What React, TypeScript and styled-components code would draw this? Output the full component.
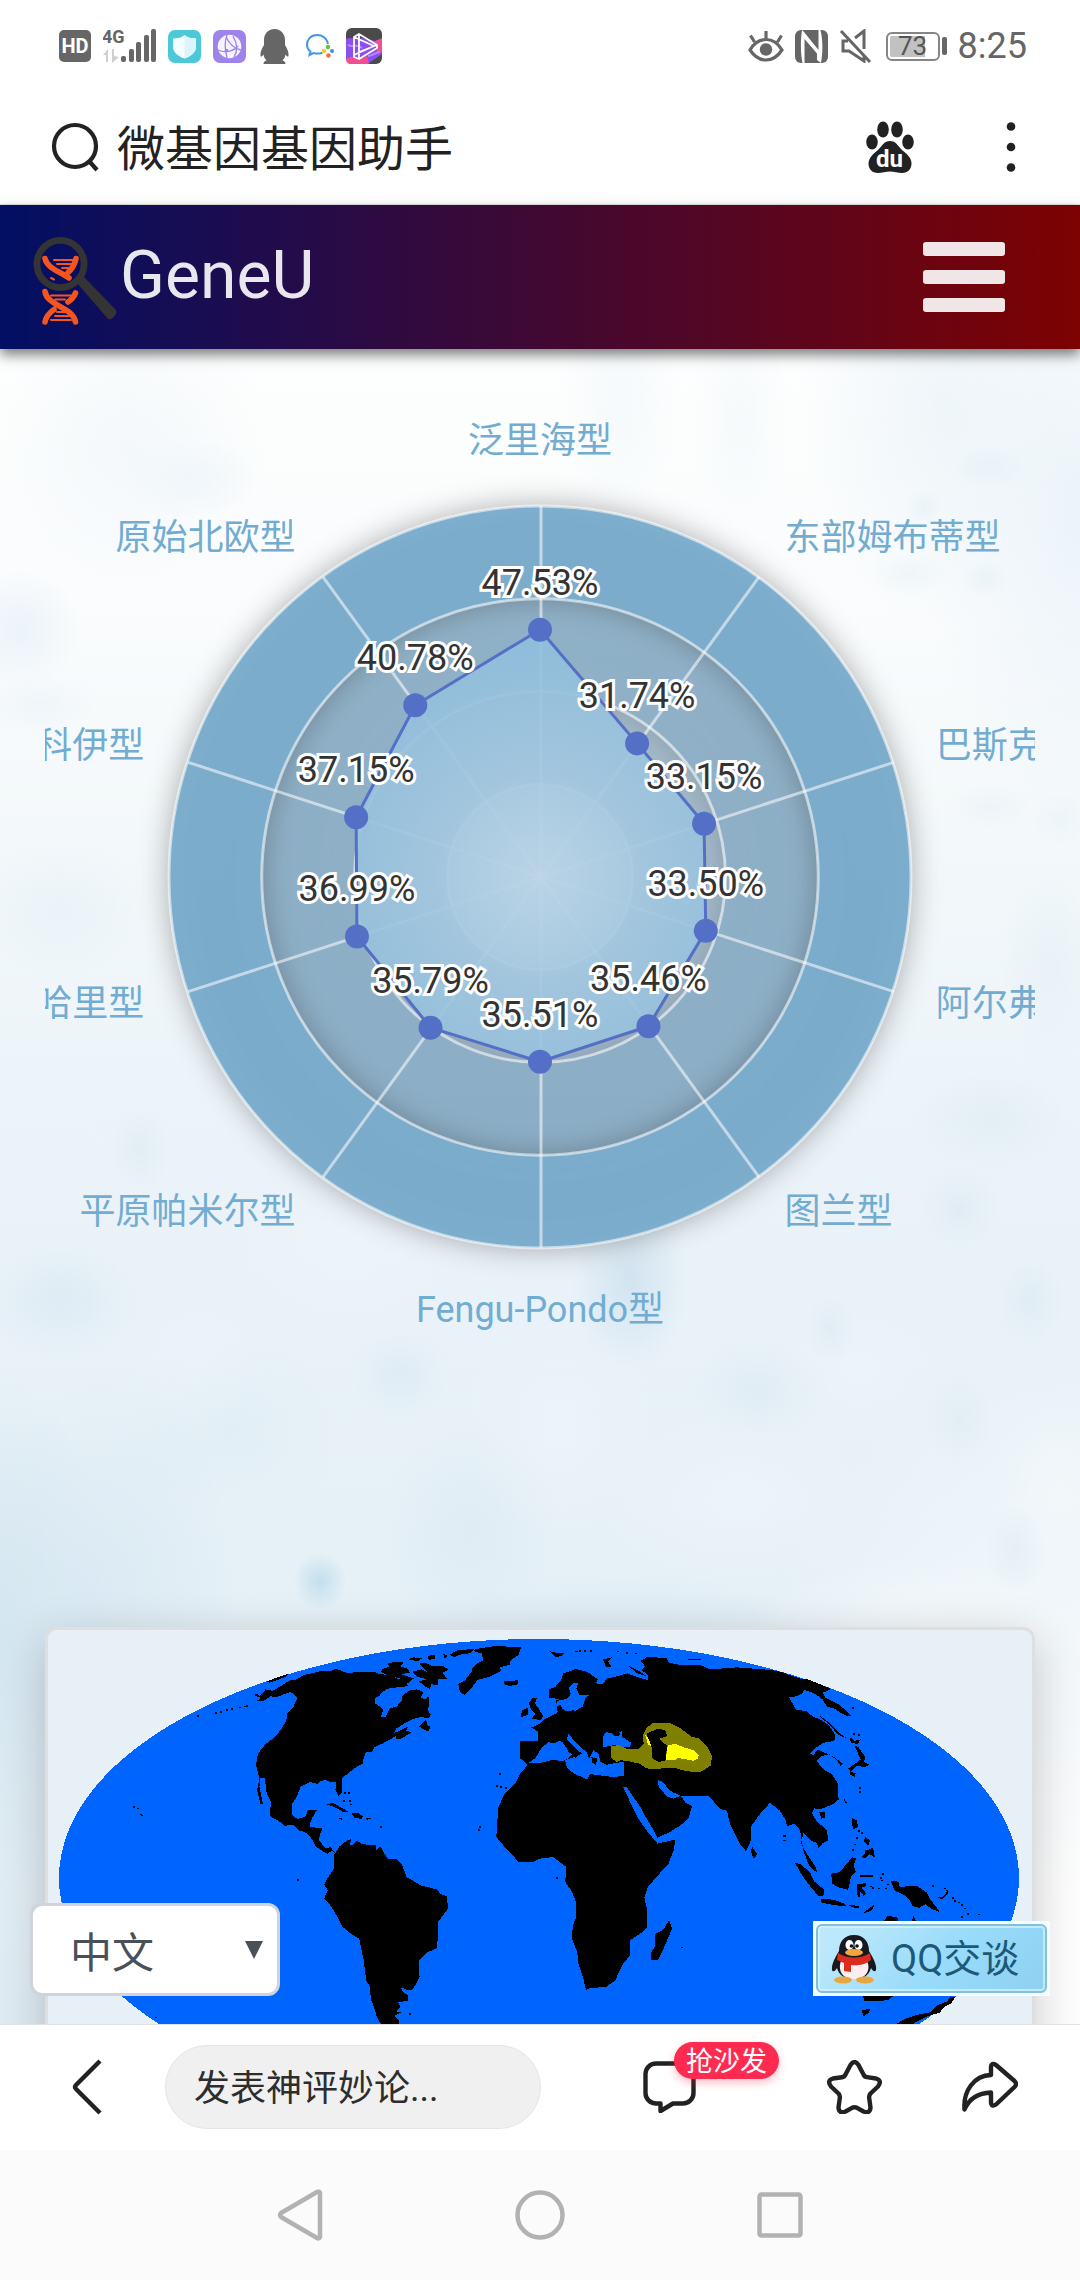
import React from "react";
import styled, { createGlobalStyle } from "styled-components";

const sans = `Roboto, "Noto Sans CJK SC", sans-serif`;
const ink = "#222222";
const statusGray = "#666666";

const GlobalStyle = createGlobalStyle`
  *, *::before, *::after { box-sizing: border-box; }
  body { margin: 0; background: #ffffff; font-family: ${sans}; }
  button, input, select { font-family: inherit; }
`;

const Screen = styled.div`
  display: flex;
  flex-direction: column;
  height: 100vh;
  background: #ffffff;
`;

/* ---------- status bar ---------- */

const StatusBar = styled.div`
  display: flex;
  flex: none;
  justify-content: space-between;
  align-items: center;
  height: 92px;
  padding: 0 53px 0 59px;
  color: ${statusGray};
`;

const StatusGroup = styled.div<{ $gap: number }>`
  display: flex;
  align-items: center;
  gap: ${(p) => p.$gap}px;
`;

const Battery = styled.div`
  display: flex;
  align-items: center;
  gap: 2px;
  margin-left: 3px;
`;

const BatteryBody = styled.span`
  width: 54px;
  height: 29px;
  border: 2px solid #858585;
  border-radius: 6px;
  padding: 2px;
  background: linear-gradient(90deg, #c1c1c1 76%, transparent 76%) content-box;
  color: #555555;
  font-size: 26px;
  line-height: 21px;
  text-align: center;
`;

const BatteryTip = styled.span`
  width: 5px;
  height: 18px;
  border-radius: 2px;
  background: ${statusGray};
`;

const Clock = styled.span`
  font-size: 36px;
  line-height: 44px;
`;

/* ---------- search bar ---------- */

const SearchBar = styled.form`
  display: flex;
  flex: none;
  align-items: center;
  height: 113px;
  padding: 0 55px 3px 51px;
  border-bottom: 1px solid #e4e4e4;
`;

const SearchInput = styled.input`
  flex: 1;
  min-width: 0;
  height: 72px;
  padding: 0 0 4px;
  margin-left: 18px;
  border: 0;
  outline: 0;
  background: transparent;
  color: ${ink};
  font-size: 48px;
`;

const IconButton = styled.button`
  display: flex;
  align-items: center;
  justify-content: center;
  padding: 0;
  border: 0;
  background: transparent;
  cursor: pointer;
`;

const MoreButton = styled(IconButton)`
  width: 28px;
  margin-left: 83px;
`;

/* ---------- site header ---------- */

const SiteHeader = styled.header`
  position: relative;
  z-index: 2;
  display: flex;
  flex: none;
  align-items: center;
  justify-content: space-between;
  height: 144px;
  padding: 0 75px 0 33px;
  background: linear-gradient(90deg, #020f64, #7d0202);
  box-shadow: 0 6px 12px rgba(0, 0, 0, 0.5);
`;

const Brand = styled.a`
  display: flex;
  align-items: center;
  gap: 3px;
  padding-top: 9px;
  color: rgba(255, 255, 255, 0.9);
  font-size: 66px;
  line-height: 88px;
  text-decoration: none;
`;

const BrandName = styled.span`
  padding-bottom: 12px;
`;

const MenuButton = styled.button`
  display: flex;
  flex-direction: column;
  gap: 14px;
  width: 82px;
  padding: 0;
  border: 0;
  background: transparent;
`;

const MenuBar = styled.span`
  height: 14px;
  border-radius: 3px;
  background: rgba(255, 255, 255, 0.9);
`;

/* ---------- page ---------- */

type Blob = [number, number, number, number, string];

const blobs: Blob[] = [
  [320, 1232, 26, 28, "rgba(176,214,232,0.65)"],
  [400, 1026, 50, 44, "rgba(204,225,239,0.35)"],
  [630, 930, 60, 90, "rgba(186,213,233,0.5)"],
  [60, 950, 80, 60, "rgba(200,223,238,0.35)"],
  [760, 1040, 70, 50, "rgba(208,227,239,0.35)"],
  [960, 860, 40, 44, "rgba(205,225,238,0.35)"],
  [990, 770, 80, 50, "rgba(212,230,239,0.4)"],
  [1030, 950, 34, 44, "rgba(206,226,238,0.35)"],
  [830, 980, 26, 34, "rgba(206,226,238,0.35)"],
  [960, 1070, 36, 46, "rgba(210,228,239,0.35)"],
  [1015, 1200, 30, 44, "rgba(210,228,239,0.35)"],
  [140, 800, 30, 40, "rgba(210,228,239,0.4)"],
  [60, 560, 90, 70, "rgba(230,240,247,0.6)"],
  [110, 780, 110, 70, "rgba(236,243,248,0.6)"],
  [20, 280, 60, 60, "rgba(226,236,247,0.6)"],
  [40, 355, 60, 30, "rgba(230,240,247,0.5)"],
  [130, 100, 140, 140, "rgba(240,246,250,0.7)"],
  [190, 130, 70, 40, "rgba(232,241,247,0.6)"],
  [620, 50, 60, 120, "rgba(234,243,248,0.4)"],
  [740, 70, 50, 120, "rgba(236,244,249,0.4)"],
  [940, 60, 140, 220, "rgba(230,240,246,0.6)"],
  [1080, 160, 160, 320, "rgba(232,241,248,0.8)"],
  [990, 118, 36, 20, "rgba(222,237,246,0.6)"],
  [924, 158, 20, 20, "rgba(222,237,245,0.5)"],
  [985, 230, 24, 20, "rgba(222,238,242,0.5)"],
  [910, 225, 40, 22, "rgba(228,241,245,0.5)"],
  [990, 458, 44, 22, "rgba(226,238,244,0.4)"],
  [1060, 470, 30, 26, "rgba(226,238,244,0.4)"],
  [1050, 620, 50, 100, "rgba(224,237,244,0.5)"],
  [100, 1240, 140, 220, "rgba(212,230,241,0.6)"],
  [0, 1280, 110, 260, "rgba(205,226,238,0.7)"],
  [470, 1180, 90, 110, "rgba(216,232,242,0.5)"],
  [620, 1300, 200, 80, "rgba(214,231,241,0.6)"],
  [230, 1080, 120, 90, "rgba(218,234,243,0.4)"],
  [560, 1080, 100, 110, "rgba(238,244,250,0.8)"],
  [200, 1010, 70, 70, "rgba(238,245,250,0.6)"],
  [350, 900, 120, 110, "rgba(238,244,250,0.7)"],
  [740, 1150, 150, 90, "rgba(240,245,250,0.7)"],
  [860, 1020, 120, 90, "rgba(238,244,250,0.7)"],
  [920, 1290, 180, 80, "rgba(245,248,250,0.8)"],
  [1060, 1140, 70, 90, "rgba(245,248,250,0.7)"],
];

const blobLayers = blobs
  .map(([x, y, w, h, c]) => `radial-gradient(${w}px ${h}px at ${x}px ${y}px, ${c}, transparent)`)
  .join(",\n    ");

const Page = styled.main`
  position: relative;
  flex: 1;
  min-height: 0;
  overflow: hidden;
  background:
    ${blobLayers},
    radial-gradient(400px 700px at 100% 100%, #fdfdfd 20%, transparent),
    linear-gradient(180deg, #fdfefe 0, #fafcfd 250px, #f3f8fa 500px, #ebf3f9 800px, #e5f0f7 1250px, #deebf2 1680px);
`;

const ChartSection = styled.section`
  padding: 0 45px;
  margin-bottom: 222px;
`;

const ChartSvg = styled.svg`
  display: block;
  width: 100%;
  height: auto;
  overflow: hidden;
  font-family: ${sans};
  font-size: 36px;
`;

const AxisLabel = styled.text`
  fill: #72acd1;
`;

const ValueLabel = styled.text`
  fill: #333333;
  stroke: #ffffff;
  stroke-width: 6px;
  stroke-linejoin: miter;
  stroke-miterlimit: 2;
  paint-order: stroke;
  text-anchor: middle;
`;

const MapCard = styled.section`
  margin: 0 45px;
  padding: 9px 13px 9px 11px;
  border: 3px solid #dfdfdf;
  border-radius: 12px;
  background: #e7f0f7;
  box-shadow: 0 12px 48px rgba(0, 0, 0, 0.2);
`;

const MapSvg = styled.svg`
  display: block;
  width: 100%;
  aspect-ratio: 960 / 478;
  shape-rendering: crispEdges;
`;

const FloatingBar = styled.div`
  position: absolute;
  right: 30px;
  bottom: 28px;
  left: 30px;
  display: flex;
  align-items: flex-end;
  justify-content: space-between;
`;

const LanguagePicker = styled.label`
  display: grid;
  align-items: center;
  width: 250px;
`;

const LanguageSelect = styled.select`
  grid-area: 1 / 1;
  height: 93px;
  padding: 8px 36px 0 37px;
  border: 3px solid #ced4da;
  border-radius: 12px;
  appearance: none;
  background: #ffffff;
  color: #495057;
  font-size: 42px;
`;

const SelectArrow = styled.svg`
  grid-area: 1 / 1;
  justify-self: end;
  margin-right: 17px;
  pointer-events: none;
`;

const QQFrame = styled.button`
  padding: 3px;
  border: 0;
  background: #f3ffff;
`;

const QQFace = styled.span`
  display: flex;
  align-items: center;
  gap: 14px;
  width: 231px;
  height: 69px;
  padding: 0 13px;
  border: 2px solid #86bfdc;
  border-radius: 6px;
  background: linear-gradient(135deg, #bde8fb 10%, #98dbfa 55%, #8fd0f0);
  box-shadow: inset 0 0 0 2px rgba(214, 243, 253, 0.7);
  color: #1c5878;
  font-size: 38px;
  line-height: 44px;
  white-space: nowrap;
`;

/* ---------- bottom bars ---------- */

const Toolbar = styled.div`
  display: flex;
  flex: none;
  align-items: center;
  justify-content: space-between;
  height: 126px;
  padding: 0 62px 2px 72px;
  border-top: 1px solid #e2e2e2;
`;

const ToolGroup = styled.div<{ $gap: number }>`
  display: flex;
  align-items: center;
  gap: ${(p) => p.$gap}px;
`;

const CommentInput = styled.input`
  width: 376px;
  height: 84px;
  padding: 4px 28px 0;
  border: 1px solid #e5e5e5;
  border-radius: 42px;
  outline: 0;
  background: #f0f0f0;
  color: #2d2d2d;
  font-size: 36px;
  &::placeholder { color: #2d2d2d; opacity: 1; }
`;

const CommentButton = styled(IconButton)`
  position: relative;
  padding-right: 51px;
`;

const Badge = styled.span`
  position: absolute;
  top: -19px;
  left: 31px;
  width: 105px;
  height: 37px;
  border-radius: 19px;
  background: #ff2a50;
  box-shadow: 0 4px 8px rgba(255, 42, 80, 0.3);
  color: #ffffff;
  font-size: 27px;
  line-height: 40px;
  text-align: center;
`;

const NavBar = styled.nav`
  display: flex;
  flex: none;
  align-items: center;
  justify-content: center;
  gap: 190px;
  height: 130px;
  background: #fbfbfb;
`;

/* ---------- status icons ---------- */

const HdIcon = () => (
  <svg width="32" height="32" viewBox="0 0 32 32">
    <rect width="32" height="32" rx="5" fill={statusGray} />
    <text x="16" y="23" textAnchor="middle" fontSize="20" fontWeight="700" fontFamily="Roboto, sans-serif" fill="#fff">HD</text>
  </svg>
);

const SignalIcon = () => (
  <svg width="53" height="36" viewBox="0 0 53 36" fill={statusGray}>
    <text x="-1" y="15" fontSize="18" fontWeight="700" fontFamily="Roboto, sans-serif">4G</text>
    <path d="M0 27l5-6v13H3v-7zM9 21h2v7l5 1-7 6z" fill="#cfcfcf" />
    <rect x="18" y="28" width="5" height="6" rx="2" />
    <rect x="26" y="21" width="5" height="13" rx="2" />
    <rect x="33" y="14" width="5" height="20" rx="2" />
    <rect x="41" y="7" width="5" height="27" rx="2" />
    <rect x="48" y="1" width="5" height="33" rx="2" />
  </svg>
);

const ShieldIcon = () => (
  <svg width="33" height="33" viewBox="0 0 33 33">
    <rect width="33" height="33" rx="7" fill="#4cc8d8" />
    <path d="M16.500 5C19 7.500 23 8.500 28 8.500V17c0 5-5 9.500-11.500 11.500C10 26.500 5 22 5 17V8.500c5 0 9-1 11.500-3.500z" fill="#f2fdff" />
    <path d="M16.500 5C19 7.500 23 8.500 28 8.500V17c0 5-5 9.500-11.500 11.500z" fill="#dbf5fa" />
  </svg>
);

const WebIcon = () => (
  <svg width="33" height="33" viewBox="0 0 33 33">
    <rect width="33" height="33" rx="7" fill="#9d83ea" />
    <circle cx="16.500" cy="16.500" r="11.800" fill="#f6f2ff" />
    <g fill="none" stroke="#9d83ea" strokeWidth="1.300">
      <path d="M14 5c-3 7-2 15 0 23M13 7c4 8 9 12 15 13M5 20c6 3 15 2 20-4M21 27c4-6 3-14-1-21" />
    </g>
    <circle cx="13.500" cy="20.500" r="1.800" fill="#9d83ea" />
  </svg>
);

const QQStatusIcon = () => (
  <svg width="33" height="35" viewBox="0 0 33 35" fill={statusGray}>
    <path d="M16.500 0C23 0 27 5 27 11v5c2 3 4 7 3.500 11-.5 1.500-2 0-3-1.500-.5 3-1.500 4.500-3 6 2 .7 3 1.500 3 3.500H5.500c0-2 1-2.800 3-3.500-1.500-1.500-2.500-3-3-6-1 1.500-2.500 3-3 1.500C2 23 4 19 6 16v-5C6 5 10 0 16.500 0z" />
  </svg>
);

const ChatStatusIcon = () => (
  <svg width="31" height="26" viewBox="0 0 31 26" fill="none">
    <path d="M25 11C24 5 19 2 14 2 8 2 4 6.500 4 11.500c0 3 1.500 5.500 3.500 7L6.500 22l4-2c3 1 6 .7 9-.3" stroke="#4596e6" strokeWidth="2" />
    <circle cx="25" cy="14" r="2.200" fill="#6bc235" />
    <circle cx="29" cy="18" r="2" fill="#3f8ee8" />
    <circle cx="21" cy="18" r="2.200" fill="#fdc82f" />
    <circle cx="25.500" cy="22.500" r="2.200" fill="#f96b35" />
  </svg>
);

const VideoStatusIcon = () => (
  <svg width="36" height="36" viewBox="0 0 36 36">
    <rect width="36" height="36" rx="6" fill="#4a4a4a" />
    <path d="M0 11c6-3 10 2 16-1l18 4 2 12-13 9H6l-6-5z" fill="#8b4ff0" />
    <path d="M29 13l7-3v14l-5 1zM0 31c5-4 8-1 13 0l8-3 2 8H5c-3 0-5-2-5-5z" fill="#ef4f93" />
    <path d="M2 17c6 3 9-2 14 3M22 28c4 0 6-3 12-4" stroke="#b58bff" strokeWidth="2" fill="none" />
    <g fill="none" stroke="#fff" strokeWidth="1.800" strokeLinejoin="round">
      <path d="M8 9l5-3 18 11v3L13 31l-5-2zM13 6v25M8 9l20 9-20 9M31 17L13 24" />
    </g>
  </svg>
);

const EyeIcon = () => (
  <svg width="36" height="32" viewBox="0 0 36 32" fill="none" stroke={statusGray} strokeWidth="3.200">
    <path d="M2 20C6 13 11 9.500 18 9.500S30 13 34 20c-4 6-9 10-16 10S6 26 2 20zM18 1v8M2.500 5.500L6.500 12M33.500 5.500L29.500 12" />
    <circle cx="18" cy="19.500" r="6.200" fill={statusGray} stroke="none" />
  </svg>
);

const NfcIcon = () => (
  <svg width="33" height="33" viewBox="0 0 33 33">
    <rect width="33" height="33" rx="6" fill={statusGray} />
    <path d="M7 0C5.500 10 5.500 23 7.500 33H9.500V9L22 23.500V30l4 3c2-10 2-23-.5-33h-2v20L9 2z" fill="#fff" />
    <path d="M9.500 0H20c1.500 5 2 10 2 16zM12 16l11 17H11c1-6 1-11 1-17z" fill={statusGray} />
  </svg>
);

const MuteIcon = () => (
  <svg width="33" height="34" viewBox="0 0 33 34" fill="none" stroke={statusGray} strokeWidth="3">
    <path d="M16 9l9-7v18M9 12H4v10h6l15 10v-6M2 2l29 31" />
  </svg>
);

/* ---------- toolbar icons ---------- */

const SearchIcon = () => (
  <svg width="48" height="50" viewBox="0 0 48 50" fill="none" stroke={ink} strokeWidth="4.200">
    <circle cx="24" cy="24" r="21" />
    <path d="M38 39l8 9" />
  </svg>
);

const PawIcon = () => (
  <svg width="48" height="52" viewBox="0 0 48 52" fill={ink}>
    <ellipse cx="6" cy="21" rx="5.800" ry="7.500" />
    <ellipse cx="17" cy="8.500" rx="5.800" ry="8" />
    <ellipse cx="31" cy="8.500" rx="5.800" ry="8" />
    <ellipse cx="42" cy="21" rx="5.800" ry="7.500" />
    <path d="M24 20c6 0 8 5 12 9 5 4 9.500 8 9.500 13.500C45.500 48 42 52 36 52c-4 0-8-1.500-12-1.500S16 52 12 52c-6 0-9.500-4-9.500-9.500C2.500 37 7 33 12 29c4-4 6-9 12-9z" />
    <text x="23.500" y="46" textAnchor="middle" fontSize="24" fontWeight="700" fontFamily="Roboto, sans-serif" fill="#fff">du</text>
  </svg>
);

const MoreIcon = () => (
  <svg width="10" height="50" viewBox="0 0 10 50" fill={ink}>
    <circle cx="5" cy="4.500" r="4.300" />
    <circle cx="5" cy="25" r="4.300" />
    <circle cx="5" cy="45.500" r="4.300" />
  </svg>
);

const LogoIcon = () => (
  <svg width="84" height="89" viewBox="13 12 84 89" fill="none">
    <g stroke="#f4551f" strokeLinecap="round">
      <path d="M25 33.500C27 43 39 46 49 53M56 33.500C54.500 40 52 44 48 47.500M25 66.500C27 81 53 82 55.500 97M55.500 68C54 72 51 75 48 77M25 97C26 91 29 88 34 84.500" strokeWidth="5.600" />
      <path d="M34 35h19M37 39h14M42 43h7M31 53l3 1.500M31 70.500h20M35 74.500h10M37 87h10M35 91h14M31 95h20" strokeWidth="2" />
    </g>
    <path d="M57 58l7-6 32 33c2 3-4 11-8 9z" fill="#343434" />
    <circle cx="40.500" cy="39" r="23.600" stroke="#343434" strokeWidth="6.800" />
  </svg>
);

const BackIcon = () => (
  <svg width="30" height="56" viewBox="0 0 30 56" fill="none" stroke={ink} strokeWidth="4.500">
    <path d="M28 2L4 26q-2 2 0 4l24 24" />
  </svg>
);

const CommentIcon = () => (
  <svg width="53" height="52" viewBox="0 0 53 52" fill="none" stroke={ink} strokeWidth="4.400" strokeLinejoin="round">
    <path d="M13 2.500h27A10.500 10.500 0 0 1 50.500 13v19A10.500 10.500 0 0 1 40 42.500H30L17.500 50v-7.500H13A10.500 10.500 0 0 1 2.500 32V13A10.500 10.500 0 0 1 13 2.500z" />
  </svg>
);

const StarIcon = () => (
  <svg width="55" height="54" viewBox="0 0 55 54" fill="none" stroke={ink} strokeWidth="4.400" strokeLinejoin="round">
    <path d="M23.500 5Q27.500 -1 31.500 5L36.500 14.500Q37.500 16.800 40 17.200L49 18.500Q55.500 20.500 51 26.500L43.500 33.500Q41.800 35.500 42.200 38L43.500 47.500Q43 54 36.500 51.500L30 47.800Q27.500 46.600 25 47.800L18.500 51.500Q12 54 11.500 47.500L12.800 38Q13.200 35.500 11.500 33.500L4 26.500Q-.5 20.500 6 18.500L15 17.200Q17.500 16.800 18.500 14.500z" />
  </svg>
);

const ShareIcon = () => (
  <svg width="56" height="51" viewBox="0 0 56 51" fill="none" stroke={ink} strokeWidth="4.400" strokeLinejoin="round">
    <path d="M29 14V6q.5-5 5-2l18.500 16q3 3 0 6L34 43.500q-4.500 3-5-2v-10C16 32 7 38 2.500 48.500 1 30 12 14.500 29 14z" />
  </svg>
);

const PenguinIcon = () => (
  <svg width="46" height="50" viewBox="0 0 46 50">
    <path d="M23 1C33 1 38 8 38 17c3 5 8 13 7 19-1 3-4 0-5-2-2 7-7 11-17 11S8 41 6 34c-1 2-4 5-5 2-1-6 4-14 7-19C8 8 13 1 23 1z" fill="#17191f" />
    <path d="M10 27c8 4 19 4 26 0 4 8 0 18-13 18S7 35 10 27z" fill="#fbeeee" />
    <ellipse cx="18.500" cy="11" rx="4" ry="5" fill="#fff" />
    <ellipse cx="27.500" cy="11" rx="4" ry="5" fill="#fff" />
    <circle cx="20.500" cy="12" r="1.800" fill="#111" />
    <circle cx="26" cy="12" r="1.800" fill="#111" />
    <ellipse cx="23" cy="18.500" rx="9" ry="3.500" fill="#f0a63c" />
    <path d="M7 19c9 6 23 6 32 0l1 7c-6 5-15 6-20 5v7l-7-1v-8l-7-3z" fill="#db2c1d" />
    <ellipse cx="12" cy="46" rx="9" ry="3.500" fill="#e9a83f" />
    <ellipse cx="34" cy="46" rx="9" ry="3.500" fill="#e9a83f" />
  </svg>
);

/* ---------- radar chart ---------- */

const CX = 495;
const CY = 528;
const R = 371;
const MAX = 71.295;

type Axis = { name: string; value: number; anchor: "start" | "middle" | "end" };

const axes: Axis[] = [
  { name: "泛里海型", value: 47.53, anchor: "middle" },
  { name: "原始北欧型", value: 40.78, anchor: "end" },
  { name: "科伊型", value: 37.15, anchor: "end" },
  { name: "哈里型", value: 36.99, anchor: "end" },
  { name: "平原帕米尔型", value: 35.79, anchor: "end" },
  { name: "Fengu-Pondo型", value: 35.51, anchor: "middle" },
  { name: "图兰型", value: 35.46, anchor: "start" },
  { name: "阿尔弗型", value: 33.5, anchor: "start" },
  { name: "巴斯克型", value: 33.15, anchor: "start" },
  { name: "东部姆布蒂型", value: 31.74, anchor: "start" },
];

const at = (i: number, r: number) => {
  const a = (i / axes.length) * Math.PI * 2;
  return { x: CX - Math.sin(a) * r, y: CY - Math.cos(a) * r };
};

const ring = (outer: number, inner: number) => {
  const circle = (r: number) =>
    r ? `M${CX - r} ${CY}a${r} ${r} 0 1 0 ${2 * r} 0a${r} ${r} 0 1 0 ${-2 * r} 0z` : "";
  return circle(outer) + circle(inner);
};

const radii = [0, R / 4, R / 2, (R * 3) / 4, R];
const ringFills = [
  "rgba(114,172,209,0.2)",
  "rgba(112,152,182,0.5)",
  "rgba(112,158,190,0.66)",
  "rgba(118,169,203,0.92)",
];

const RadarChart = () => {
  const points = axes.map((a, i) => at(i, (a.value / MAX) * R));
  return (
    <ChartSvg viewBox="0 0 990 1056" role="img" aria-label="GeneU">
      <defs>
        <filter id="ringShadow" x="-20%" y="-20%" width="140%" height="140%">
          <feDropShadow dx="0" dy="0" stdDeviation="15" floodColor="#000" floodOpacity="0.36" />
        </filter>
        <radialGradient id="area" gradientUnits="userSpaceOnUse" cx={CX} cy={CY} r="250">
          <stop offset="0" stopColor="#b7d2e5" stopOpacity="0.9" />
          <stop offset="0.45" stopColor="#a1c6df" stopOpacity="0.91" />
          <stop offset="1" stopColor="#8dbddb" stopOpacity="0.92" />
        </radialGradient>
      </defs>
      {ringFills.map((fill, i) => (
        <path key={i} d={ring(radii[i + 1], radii[i])} fillRule="evenodd" fill={fill} filter="url(#ringShadow)" />
      ))}
      <g fill="none" stroke="#fff" strokeOpacity="0.55" strokeWidth="3">
        {radii.slice(1).map((r) => (
          <circle key={r} cx={CX} cy={CY} r={r} />
        ))}
        {axes.map((a, i) => {
          const end = at(i, R);
          return <line key={a.name} x1={CX + 1} y1={CY} x2={end.x + 1} y2={end.y} />;
        })}
      </g>
      <polygon points={points.map((p) => `${p.x},${p.y}`).join(" ")} fill="url(#area)" stroke="#5470c6" strokeWidth="3" strokeLinejoin="round" />
      {points.map((p, i) => (
        <circle key={i} cx={p.x} cy={p.y} r="12" fill="#5470c6" />
      ))}
      {points.map((p, i) => (
        <ValueLabel key={i} x={p.x} y={p.y - 35}>{`${axes[i].value.toFixed(2)}%`}</ValueLabel>
      ))}
      {axes.map((a, i) => {
        const p = at(i, R + 45);
        const shift = i === 0 ? -8 : i === 5 ? 29 : 10;
        return (
          <AxisLabel key={a.name} x={p.x} y={p.y + shift} textAnchor={a.anchor}>{a.name}</AxisLabel>
        );
      })}
    </ChartSvg>
  );
};

/* ---------- world map ---------- */

const land = [
  // North America
  "735,255 745,250 752,258 770,238 790,242 808,232 838,212 860,208 880,195 905,190 930,183 955,184 975,176 995,184 1012,190 1030,186 1085,185 1100,192 1130,195 1150,205 1175,212 1185,228 1150,232 1125,236 1108,246 1100,258 1088,264 1086,280 1105,290 1112,300 1105,320 1118,321 1130,295 1150,290 1165,272 1168,256 1190,240 1210,238 1228,246 1220,262 1232,268 1245,258 1246,285 1240,300 1250,312 1243,325 1222,320 1195,328 1170,342 1150,355 1143,368 1160,362 1185,348 1178,362 1195,366 1165,385 1150,388 1150,376 1135,386 1110,400 1085,412 1080,424 1062,425 1055,442 1052,460 1035,470 1010,488 992,506 992,545 982,558 973,538 976,515 960,517 945,510 928,512 922,522 900,515 872,530 860,560 848,580 848,615 862,626 885,620 893,600 920,598 908,618 900,635 900,650 935,655 928,672 925,690 945,715 958,710 972,728 962,722 950,730 935,722 915,708 900,678 885,666 865,660 852,645 825,646 805,630 783,618 785,575 772,545 768,505 755,502 752,530 762,580 755,580 745,540 752,505 742,465 748,430 770,402 800,378 820,350 830,330 834,308 850,292 862,265 850,250 840,246 825,252 800,262 785,258 765,272 740,274 757,264",
  // Chukotka sliver
  "775,214 800,203 838,190 828,200 800,212 780,218",
  // South America
  "970,732 985,708 1005,692 1018,686 1015,705 1022,706 1035,690 1050,702 1090,704 1092,718 1105,708 1110,722 1125,746 1150,746 1165,760 1174,785 1180,802 1200,812 1222,826 1250,832 1268,838 1278,850 1296,858 1300,895 1284,916 1270,936 1272,970 1266,1015 1240,1025 1226,1040 1216,1050 1217,1098 1207,1120 1195,1138 1180,1138 1162,1130 1170,1145 1184,1155 1183,1170 1155,1176 1162,1190 1150,1202 1162,1206 1145,1216 1158,1232 1150,1260 1130,1290 1105,1240 1096,1225 1085,1190 1075,1165 1074,1130 1062,1110 1055,1050 1047,1010 1042,985 1020,972 992,948 978,918 958,885 940,865 950,840 940,822 955,795 968,775",
  // Greenland
  "1372,120 1395,114 1440,108 1512,112 1505,135 1482,150 1478,165 1450,172 1455,182 1420,200 1385,210 1375,225 1348,254 1334,246 1330,222 1350,210 1368,185 1368,176 1384,160 1402,152 1398,130 1380,126",
  // Canadian Arctic
  "1108,178 1130,170 1125,160 1150,155 1172,158 1160,168 1182,176 1190,188 1162,192 1200,205 1180,222 1160,205 1128,198 1105,186",
  "1215,158 1238,160 1255,168 1288,168 1300,180 1284,188 1296,206 1272,206 1270,226 1250,222 1248,238 1232,228 1216,214 1238,208 1210,200 1196,185 1222,178 1240,186",
  "1305,135 1322,122 1378,116 1365,130 1340,132 1318,142",
  "1185,148 1198,142 1226,144 1215,152 1190,151", "1240,138 1262,134 1262,146 1244,150", "1284,130 1300,138 1290,144",
  // Iceland, Newfoundland, Caribbean
  "1462,212 1480,214 1502,210 1504,222 1480,228 1464,224", "1216,350 1236,328 1240,345 1250,350 1242,364",
  "945,582 965,578 990,592 1013,606 995,605 970,590", "1020,610 1038,608 1052,618 1048,626 1028,622", "980,623 992,624 990,629", "1062,622 1076,625 1064,629",
  // British Isles
  "1546,262 1558,264 1552,280 1566,300 1576,318 1570,330 1542,326 1554,312 1542,300 1534,280", "1516,300 1532,292 1532,314 1510,322",
  // Eurasia and Africa
  "1508,392 1562,392 1562,365 1542,352 1568,340 1580,328 1610,312 1618,305 1614,270 1626,272 1630,295 1645,304 1665,300 1690,290 1700,262 1668,258 1650,262 1640,270 1620,268 1608,264 1593,264 1592,238 1610,232 1628,210 1635,190 1660,182 1670,176 1705,186 1735,208 1728,220 1750,222 1760,206 1800,196 1820,190 1860,204 1880,210 1880,195 1862,180 1872,170 1860,152 1880,140 1935,145 1942,158 1980,166 2030,164 2062,178 2140,172 2240,180 2268,186 2320,205 2345,208 2412,236 2395,246 2386,244 2395,262 2430,280 2455,300 2472,320 2452,315 2420,295 2400,290 2388,268 2360,248 2335,240 2320,262 2290,262 2306,285 2310,300 2340,302 2360,320 2380,328 2405,345 2425,375 2422,392 2390,398 2372,410 2350,430 2362,435 2372,418 2400,430 2420,440 2446,460 2440,468 2430,452 2408,432 2385,438 2370,452 2392,480 2415,492 2432,520 2434,568 2418,582 2378,598 2364,594 2356,608 2370,632 2400,660 2404,690 2388,698 2376,714 2370,698 2352,690 2332,668 2325,700 2345,736 2368,770 2372,788 2348,766 2332,722 2322,660 2306,640 2284,648 2280,628 2262,600 2235,578 2210,605 2180,648 2180,690 2165,722 2150,706 2132,668 2118,640 2110,602 2090,596 2072,575 2055,556 2008,558 1975,556 1950,545 1935,530 1920,512 1908,510 1912,530 1935,558 1955,566 1975,556 1990,578 2008,588 1998,625 1975,645 1945,665 1908,682 1896,658 1878,628 1858,590 1838,560 1820,532 1808,530 1830,578 1852,625 1880,665 1908,700 1930,695 1960,688 1955,720 1940,760 1905,800 1880,830 1870,860 1878,900 1878,950 1860,968 1828,990 1828,1035 1808,1060 1785,1110 1758,1130 1715,1132 1700,1138 1692,1100 1678,1060 1675,1025 1660,985 1662,945 1672,920 1670,870 1658,840 1640,815 1644,770 1620,752 1605,740 1568,745 1545,755 1505,756 1482,728 1460,705 1440,680 1446,590 1465,550 1495,520 1510,490 1530,465 1520,452 1508,444",
  // Madagascar, Sri Lanka
  "1942,928 1950,955 1930,1005 1910,1048 1890,1050 1888,1030 1902,1005 1902,970 1925,958", "2182,708 2198,732 2188,746 2180,725",
  // Japan, Sakhalin, Taiwan, Hainan
  "2480,405 2492,412 2512,440 2508,455 2525,464 2508,472 2488,466 2470,485 2462,475 2480,462 2498,448", "2466,380 2480,392 2498,388 2490,402 2470,398", "2466,482 2484,490 2480,500 2466,492",
  "2380,318 2400,332 2440,372 2460,385 2435,375 2410,348", "2448,560 2460,582 2452,576", "2378,606 2396,606 2394,622 2384,626",
  // Philippines
  "2474,624 2488,630 2490,650 2478,658 2472,640", "2510,680 2526,690 2520,706 2508,695", "2502,740 2515,722 2534,712 2540,742 2524,732 2512,744",
  // Indonesia and New Guinea
  "2306,756 2325,762 2352,788 2362,812 2392,838 2390,856 2376,858 2350,826 2330,798", "2382,865 2420,868 2452,880 2456,888 2418,884 2384,876",
  "2412,790 2436,786 2455,764 2474,740 2484,745 2478,765 2484,785 2470,800 2462,838 2435,832 2416,820",
  "2488,822 2515,818 2512,828 2500,832 2515,850 2506,856 2498,842 2494,866 2488,850", "2496,795 2535,794 2534,800 2498,800", "2460,886 2475,884 2495,888 2490,894",
  "2504,910 2522,894 2540,882 2530,900", "2585,812 2608,814 2612,830 2632,828 2660,826 2690,846 2702,870 2718,890 2728,905 2706,896 2686,882 2668,892 2650,888 2640,868 2622,852 2598,842", "2720,862 2740,858 2750,840 2752,850 2736,866",
  // Australia, Tasmania, New Zealand
  "2552,938 2570,928 2575,916 2608,922 2605,938 2640,950 2652,916 2662,940 2680,1000 2660,1080 2600,1150 2580,1168 2545,1173 2508,1170 2500,1130 2420,1130 2400,1080 2420,1000 2500,960", "2502,1200 2526,1194 2522,1206 2506,1218",
  "2602,1240 2620,1228 2655,1215 2700,1205 2720,1185 2750,1172 2758,1158 2772,1160 2762,1178 2740,1190 2728,1206 2690,1218 2650,1240 2610,1250",
  // Svalbard, Novaya Zemlya
  "1596,124 1620,130 1638,128 1632,136 1614,142", "1750,148 1775,142 1765,155 1775,172 1758,170", "1996,146 2034,147 2034,151 1996,151", "1820,165 1850,180 1880,200 1850,190",
];

const seas = [
  // western Mediterranean
  "1532,460 1555,442 1570,416 1590,396 1608,400 1622,392 1635,398 1642,412 1664,430 1652,442 1635,452 1600,450 1568,458",
  // eastern Mediterranean and Aegean
  "1640,450 1668,440 1688,430 1668,412 1644,388 1650,372 1662,386 1685,412 1702,425 1710,445 1722,420 1738,432 1742,455 1760,464 1780,460 1812,454 1812,498 1775,500 1712,492 1705,508 1665,490 1645,472",
  // Black Sea
  "1750,378 1760,366 1785,372 1806,362 1806,380 1832,398 1828,410 1800,412 1785,404 1750,412",
  // Baltic and Gulf of Bothnia
  "1664,218 1678,220 1672,236 1682,256 1710,256 1686,270 1694,288 1670,302 1640,296 1626,284 1612,290 1618,272 1648,266 1656,250 1650,234",
  "2290,262 2306,260 2345,245 2378,275 2370,285 2350,280 2345,294 2310,296",
];

const islets: [number, number][] = [
  [386, 587], [396, 592], [404, 610], [407, 613], [860, 806], [448, 1218], [1390, 648], [1386, 656], [1448, 488], [1440, 524], [1450, 528], [1466, 530],
  [570, 316], [622, 307], [638, 303], [656, 297], [670, 294], [694, 290], [706, 287], [714, 285], [1008, 545], [996, 570], [1012, 570], [1014, 580], [1102, 648], [998, 545],
  [1670, 122], [1680, 120], [1695, 120], [1712, 120], [1790, 122], [1816, 126], [1842, 128], [1614, 800], [1976, 1009], [2274, 674], [2274, 688],
  [2492, 530], [2492, 542], [2490, 660], [2484, 680], [2478, 700], [2472, 716], [2500, 665], [2510, 720], [2555, 800], [2560, 788], [2556, 808],
  [2524, 826], [2532, 830], [2548, 832], [2570, 832], [2574, 820], [2704, 824], [2740, 832], [2746, 838], [2764, 860], [2770, 870], [2780, 874], [2790, 882], [2798, 892], [2790, 918], [2806, 908], [2840, 910],
  [2476, 370], [2490, 372], [2474, 292], [1186, 1208], [1092, 1210],
];

const WorldMap = () => (
  <MapSvg viewBox="170 87 2788 1432" preserveAspectRatio="none" role="img" aria-label="地图">
    <ellipse cx="1564" cy="803" rx="1394" ry="716" fill="#0064ff" />
    <g fill="#000000">
      {land.map((d, i) => (
        <polygon key={i} points={d} />
      ))}
    </g>
    <g fill="#0064ff">
      {seas.map((d, i) => (
        <polygon key={i} points={d} />
      ))}
    </g>
    <g fill="#000000">
      <polygon points="1630,392 1650,402 1668,416 1684,428 1676,432 1672,444 1650,425" />
      <polygon points="1716,440 1734,446 1728,464 1718,456" />
      <polygon points="1776,366 1800,368 1796,378 1780,376" />
      {islets.map(([x, y]) => (
        <rect key={`${x}-${y}`} x={x} y={y} width="6" height="5" />
      ))}
    </g>
    <polygon points="1773,408 1798,405 1820,416 1850,418 1868,402 1866,375 1875,355 1893,340 1943,338 1975,355 2008,380 2030,385 2052,408 2066,435 2064,465 2045,478 2028,487 1988,482 1960,474 1938,472 1898,478 1875,474 1855,460 1818,452 1800,450 1790,456 1773,442" fill="#808000" />
    <polygon points="1878,370 1895,362 1913,355 1932,362 1936,378 1914,386 1924,398 1936,404 1932,450 1913,456 1892,444 1892,410 1880,402" fill="#000000" />
    <g fill="#ffff00">
      <polygon points="1938,404 1962,402 1985,412 2012,420 2028,434 2026,446 2012,452 1985,446 1965,444 1960,450 1932,450" />
      <polygon points="1873,375 1880,380 1890,408 1880,402" />
    </g>
  </MapSvg>
);

export default function App() {
  return (
    <Screen>
      <GlobalStyle />
      <StatusBar>
        <StatusGroup $gap={12}>
          <HdIcon />
          <SignalIcon />
          <ShieldIcon />
          <WebIcon />
          <QQStatusIcon />
          <ChatStatusIcon />
          <VideoStatusIcon />
        </StatusGroup>
        <StatusGroup $gap={11}>
          <EyeIcon />
          <NfcIcon />
          <MuteIcon />
          <Battery>
            <BatteryBody>73</BatteryBody>
            <BatteryTip />
          </Battery>
          <Clock>8:25</Clock>
        </StatusGroup>
      </StatusBar>

      <SearchBar onSubmit={(e) => e.preventDefault()}>
        <SearchIcon />
        <SearchInput aria-label="搜索" type="text" defaultValue="微基因基因助手" />
        <IconButton type="button" aria-label="百度">
          <PawIcon />
        </IconButton>
        <MoreButton type="button" aria-label="更多">
          <MoreIcon />
        </MoreButton>
      </SearchBar>

      <SiteHeader>
        <Brand href="#">
          <LogoIcon />
          <BrandName>GeneU</BrandName>
        </Brand>
        <MenuButton type="button" aria-label="菜单">
          <MenuBar />
          <MenuBar />
          <MenuBar />
        </MenuButton>
      </SiteHeader>

      <Page>
        <ChartSection>
          <RadarChart />
        </ChartSection>
        <MapCard>
          <WorldMap />
        </MapCard>
        <FloatingBar>
          <LanguagePicker>
            <LanguageSelect aria-label="语言" defaultValue="zh">
              <option value="zh">中文</option>
            </LanguageSelect>
            <SelectArrow width="18" height="18" viewBox="0 0 18 18">
              <path d="M0 0h18L9 18z" fill="#495057" />
            </SelectArrow>
          </LanguagePicker>
          <QQFrame type="button">
            <QQFace>
              <PenguinIcon />
              QQ交谈
            </QQFace>
          </QQFrame>
        </FloatingBar>
      </Page>

      <Toolbar>
        <ToolGroup $gap={63}>
          <IconButton type="button" aria-label="返回">
            <BackIcon />
          </IconButton>
          <CommentInput aria-label="评论" placeholder="发表神评妙论..." />
        </ToolGroup>
        <ToolGroup $gap={80}>
          <CommentButton type="button">
            <CommentIcon />
            <Badge>抢沙发</Badge>
          </CommentButton>
          <IconButton type="button" aria-label="收藏">
            <StarIcon />
          </IconButton>
          <IconButton type="button" aria-label="分享">
            <ShareIcon />
          </IconButton>
        </ToolGroup>
      </Toolbar>

      <NavBar>
        <IconButton type="button" aria-label="后退">
          <svg width="50" height="52" viewBox="0 0 50 52" fill="none" stroke="#b2b2b2" strokeWidth="4.500" strokeLinejoin="round">
            <path d="M45 4v44q-1 2-3 1L6 28q-2-2 0-4L42 3q2-1 3 1z" />
          </svg>
        </IconButton>
        <IconButton type="button" aria-label="主屏幕">
          <svg width="50" height="50" viewBox="0 0 50 50" fill="none" stroke="#b2b2b2" strokeWidth="4.500">
            <circle cx="25" cy="25" r="22.500" />
          </svg>
        </IconButton>
        <IconButton type="button" aria-label="最近任务">
          <svg width="50" height="50" viewBox="0 0 50 50" fill="none" stroke="#b2b2b2" strokeWidth="4.500">
            <rect x="4.500" y="4.500" width="41" height="41" rx="2" />
          </svg>
        </IconButton>
      </NavBar>
    </Screen>
  );
}
